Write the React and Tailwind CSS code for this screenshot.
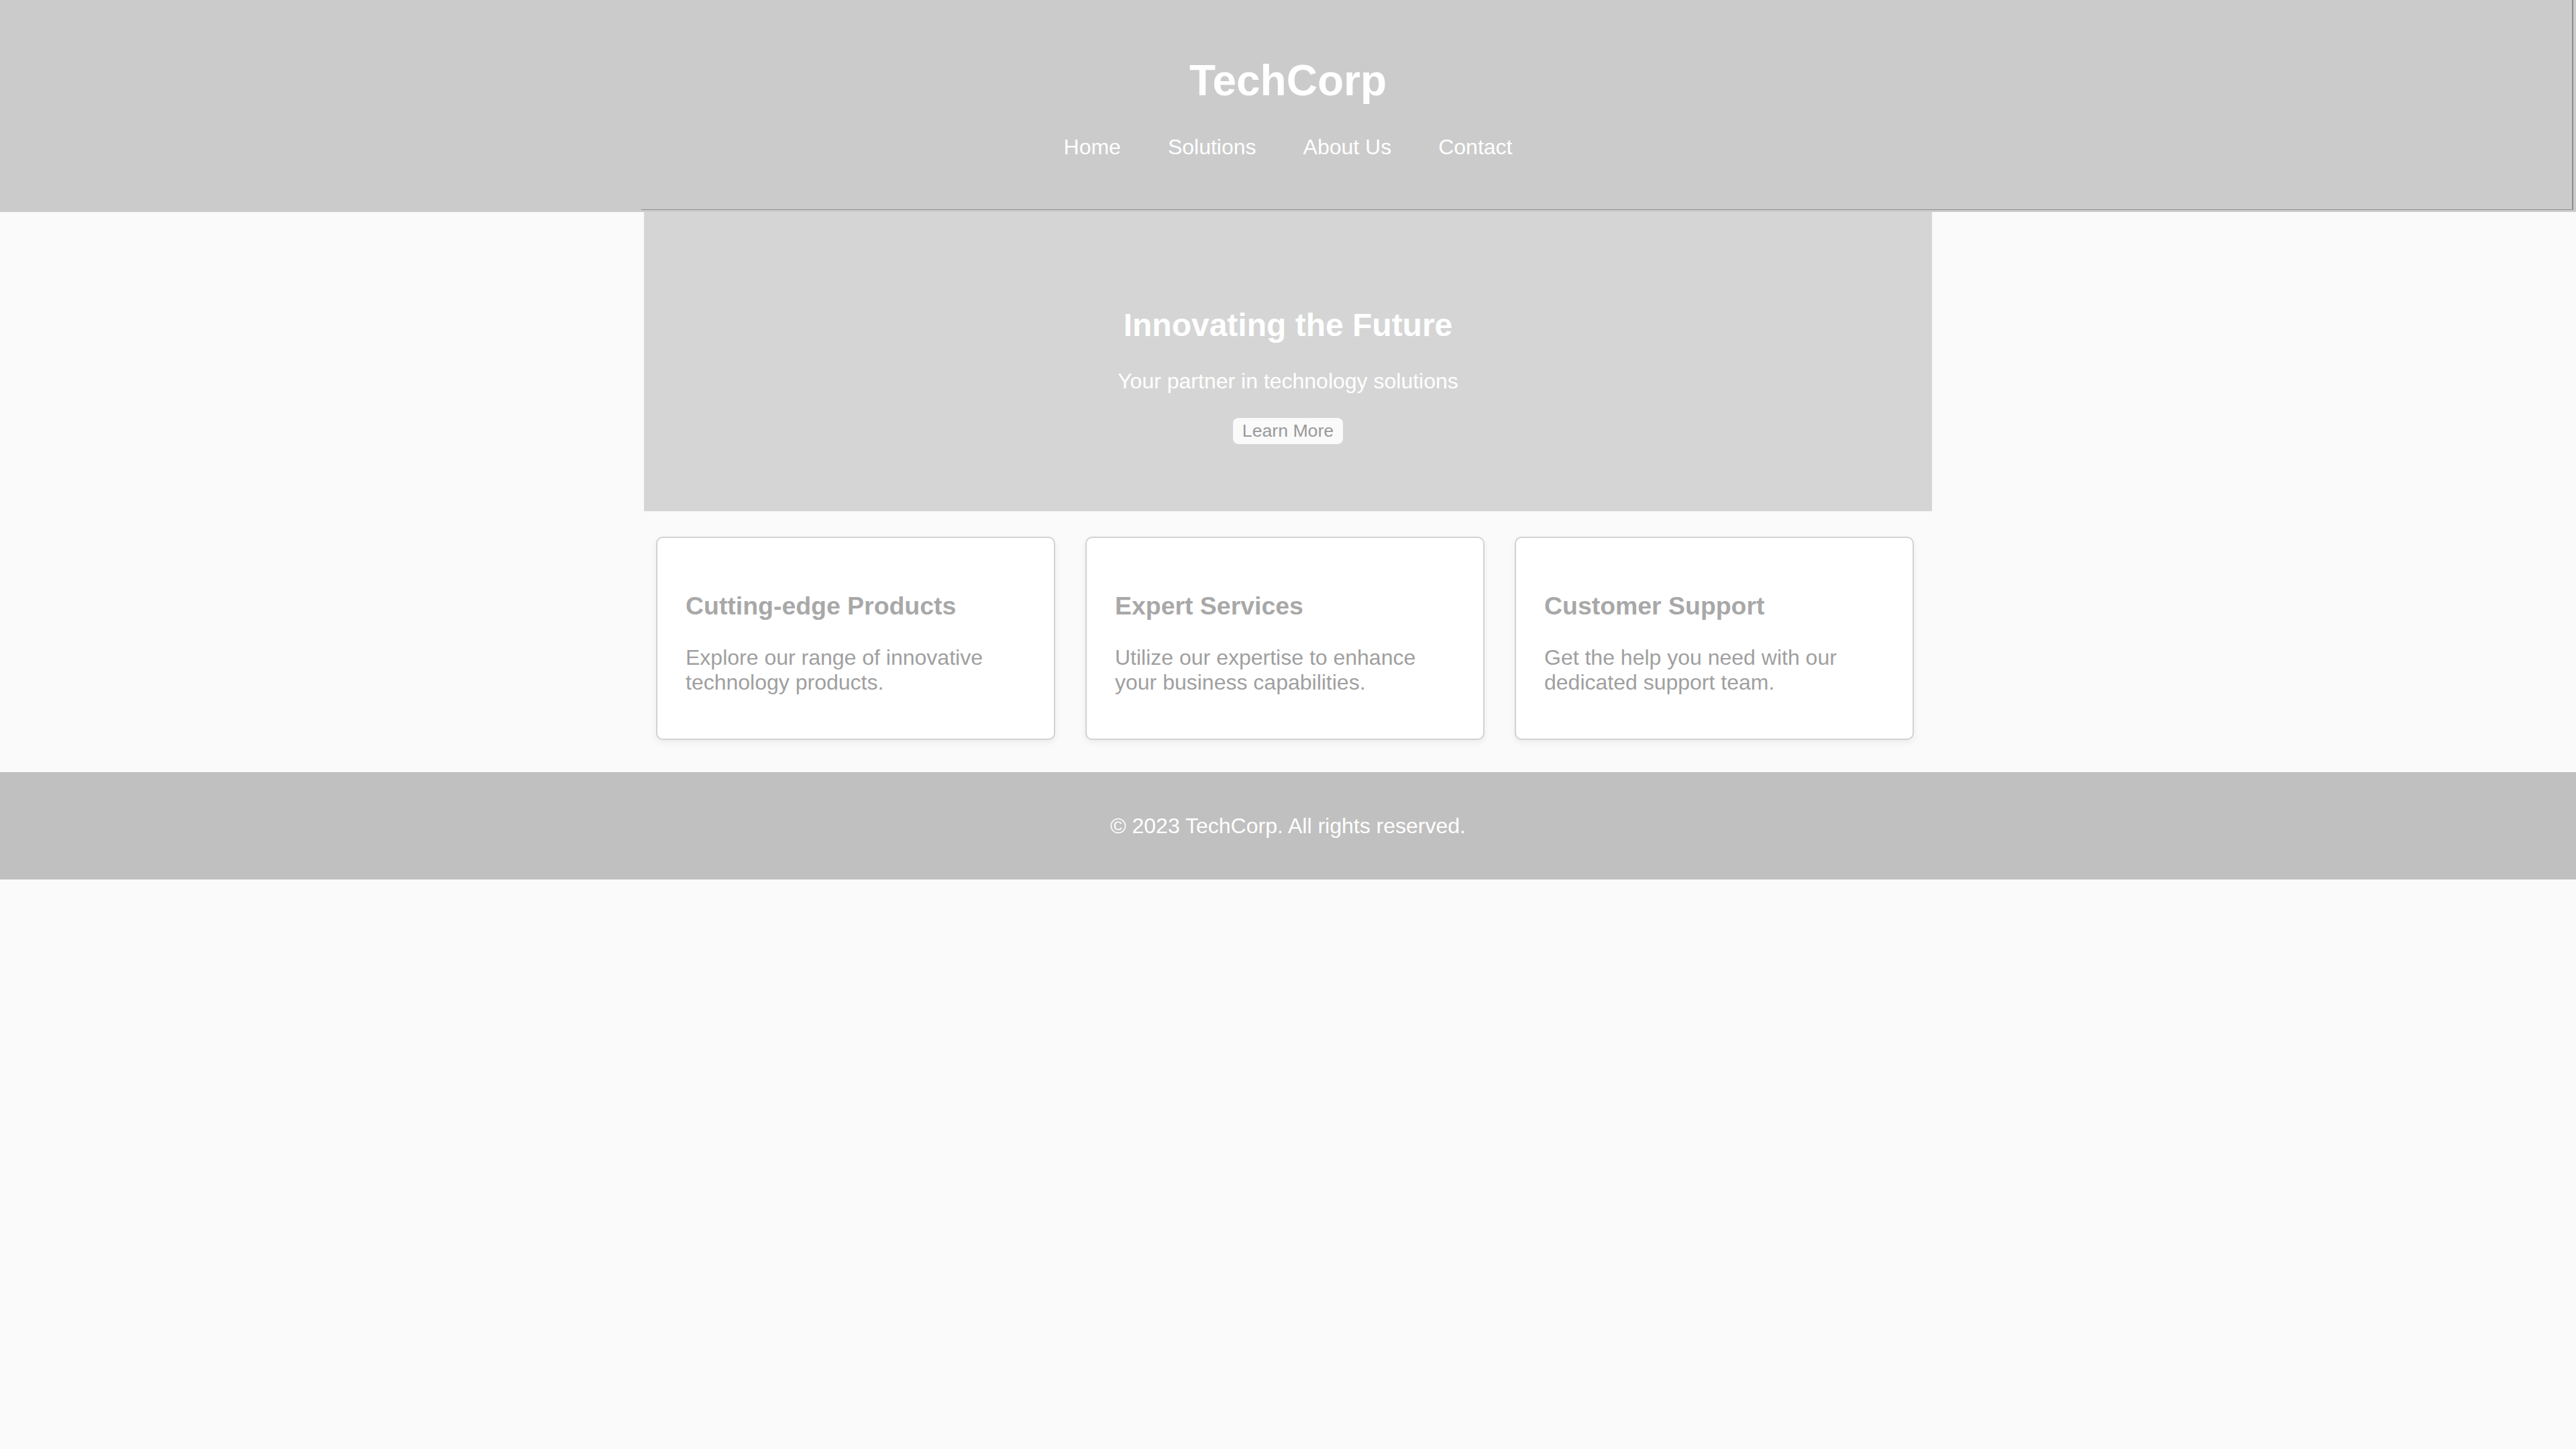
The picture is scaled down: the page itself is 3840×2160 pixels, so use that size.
import React from 'react';

const features = [
  {
    title: 'Cutting-edge Products',
    text: 'Explore our range of innovative technology products.',
  },
  {
    title: 'Expert Services',
    text: 'Utilize our expertise to enhance your business capabilities.',
  },
  {
    title: 'Customer Support',
    text: 'Get the help you need with our dedicated support team.',
  },
];

const navLinks = ['Home', 'Solutions', 'About Us', 'Contact'];

export default function App() {
  return (
    <div className="min-h-screen bg-[#fafafa] font-['Liberation_Sans',Arial,sans-serif]">
      <header className="relative h-[316px] bg-[#cbcbcb] pt-[84px] text-center text-white">
        <h1 className="mb-[43px] text-[64px] font-bold leading-[73.6px]">TechCorp</h1>
        <nav className="flex justify-center gap-[70px] text-[32px] leading-[36.8px]">
          {navLinks.map((link) => (
            <a key={link} href="#" className="text-white">
              {link}
            </a>
          ))}
        </nav>
        {/* stray outline left over on the header edge */}
        <div className="pointer-events-none absolute top-0 right-[4px] left-[956px] h-[313px] border-r-2 border-b border-[#8c8c8c]" />
      </header>

      <main className="mx-auto w-[1920px]">
        <section className="flex h-[446px] flex-col items-center bg-[#d5d5d5] pt-[141px] text-center text-white">
          <h2 className="mb-[38px] text-[48px] font-bold leading-[55.2px]">Innovating the Future</h2>
          <p className="mb-[36px] text-[32px] leading-[36.8px]">Your partner in technology solutions</p>
          <button
            type="button"
            className="h-[39px] rounded-[8px] bg-[#fafafa] px-[14px] text-[26.67px] leading-[30.7px] text-[#999999]"
          >
            Learn More
          </button>
        </section>

        <section className="flex gap-[45px] pt-[38px] pl-[18px]">
          {features.map((f) => (
            <div
              key={f.title}
              className="h-[303px] w-[595px] rounded-[10px] border-2 border-[#d2d2d2] bg-white px-[42px] pt-[80px] shadow-[0_4px_10px_rgba(0,0,0,0.06)]"
            >
              <h3 className="mb-[37.4px] text-[37.44px] font-bold leading-[43px] text-[#a8a8a8]">{f.title}</h3>
              <p className="text-[32px] leading-[36.8px] text-[#9f9f9f]">{f.text}</p>
            </div>
          ))}
        </section>
      </main>

      <footer className="mt-[48px] flex h-[160px] items-center justify-center bg-[#c0c0c0] text-[32px] leading-[36.8px] text-white">
        <p>© 2023 TechCorp. All rights reserved.</p>
      </footer>
    </div>
  );
}
